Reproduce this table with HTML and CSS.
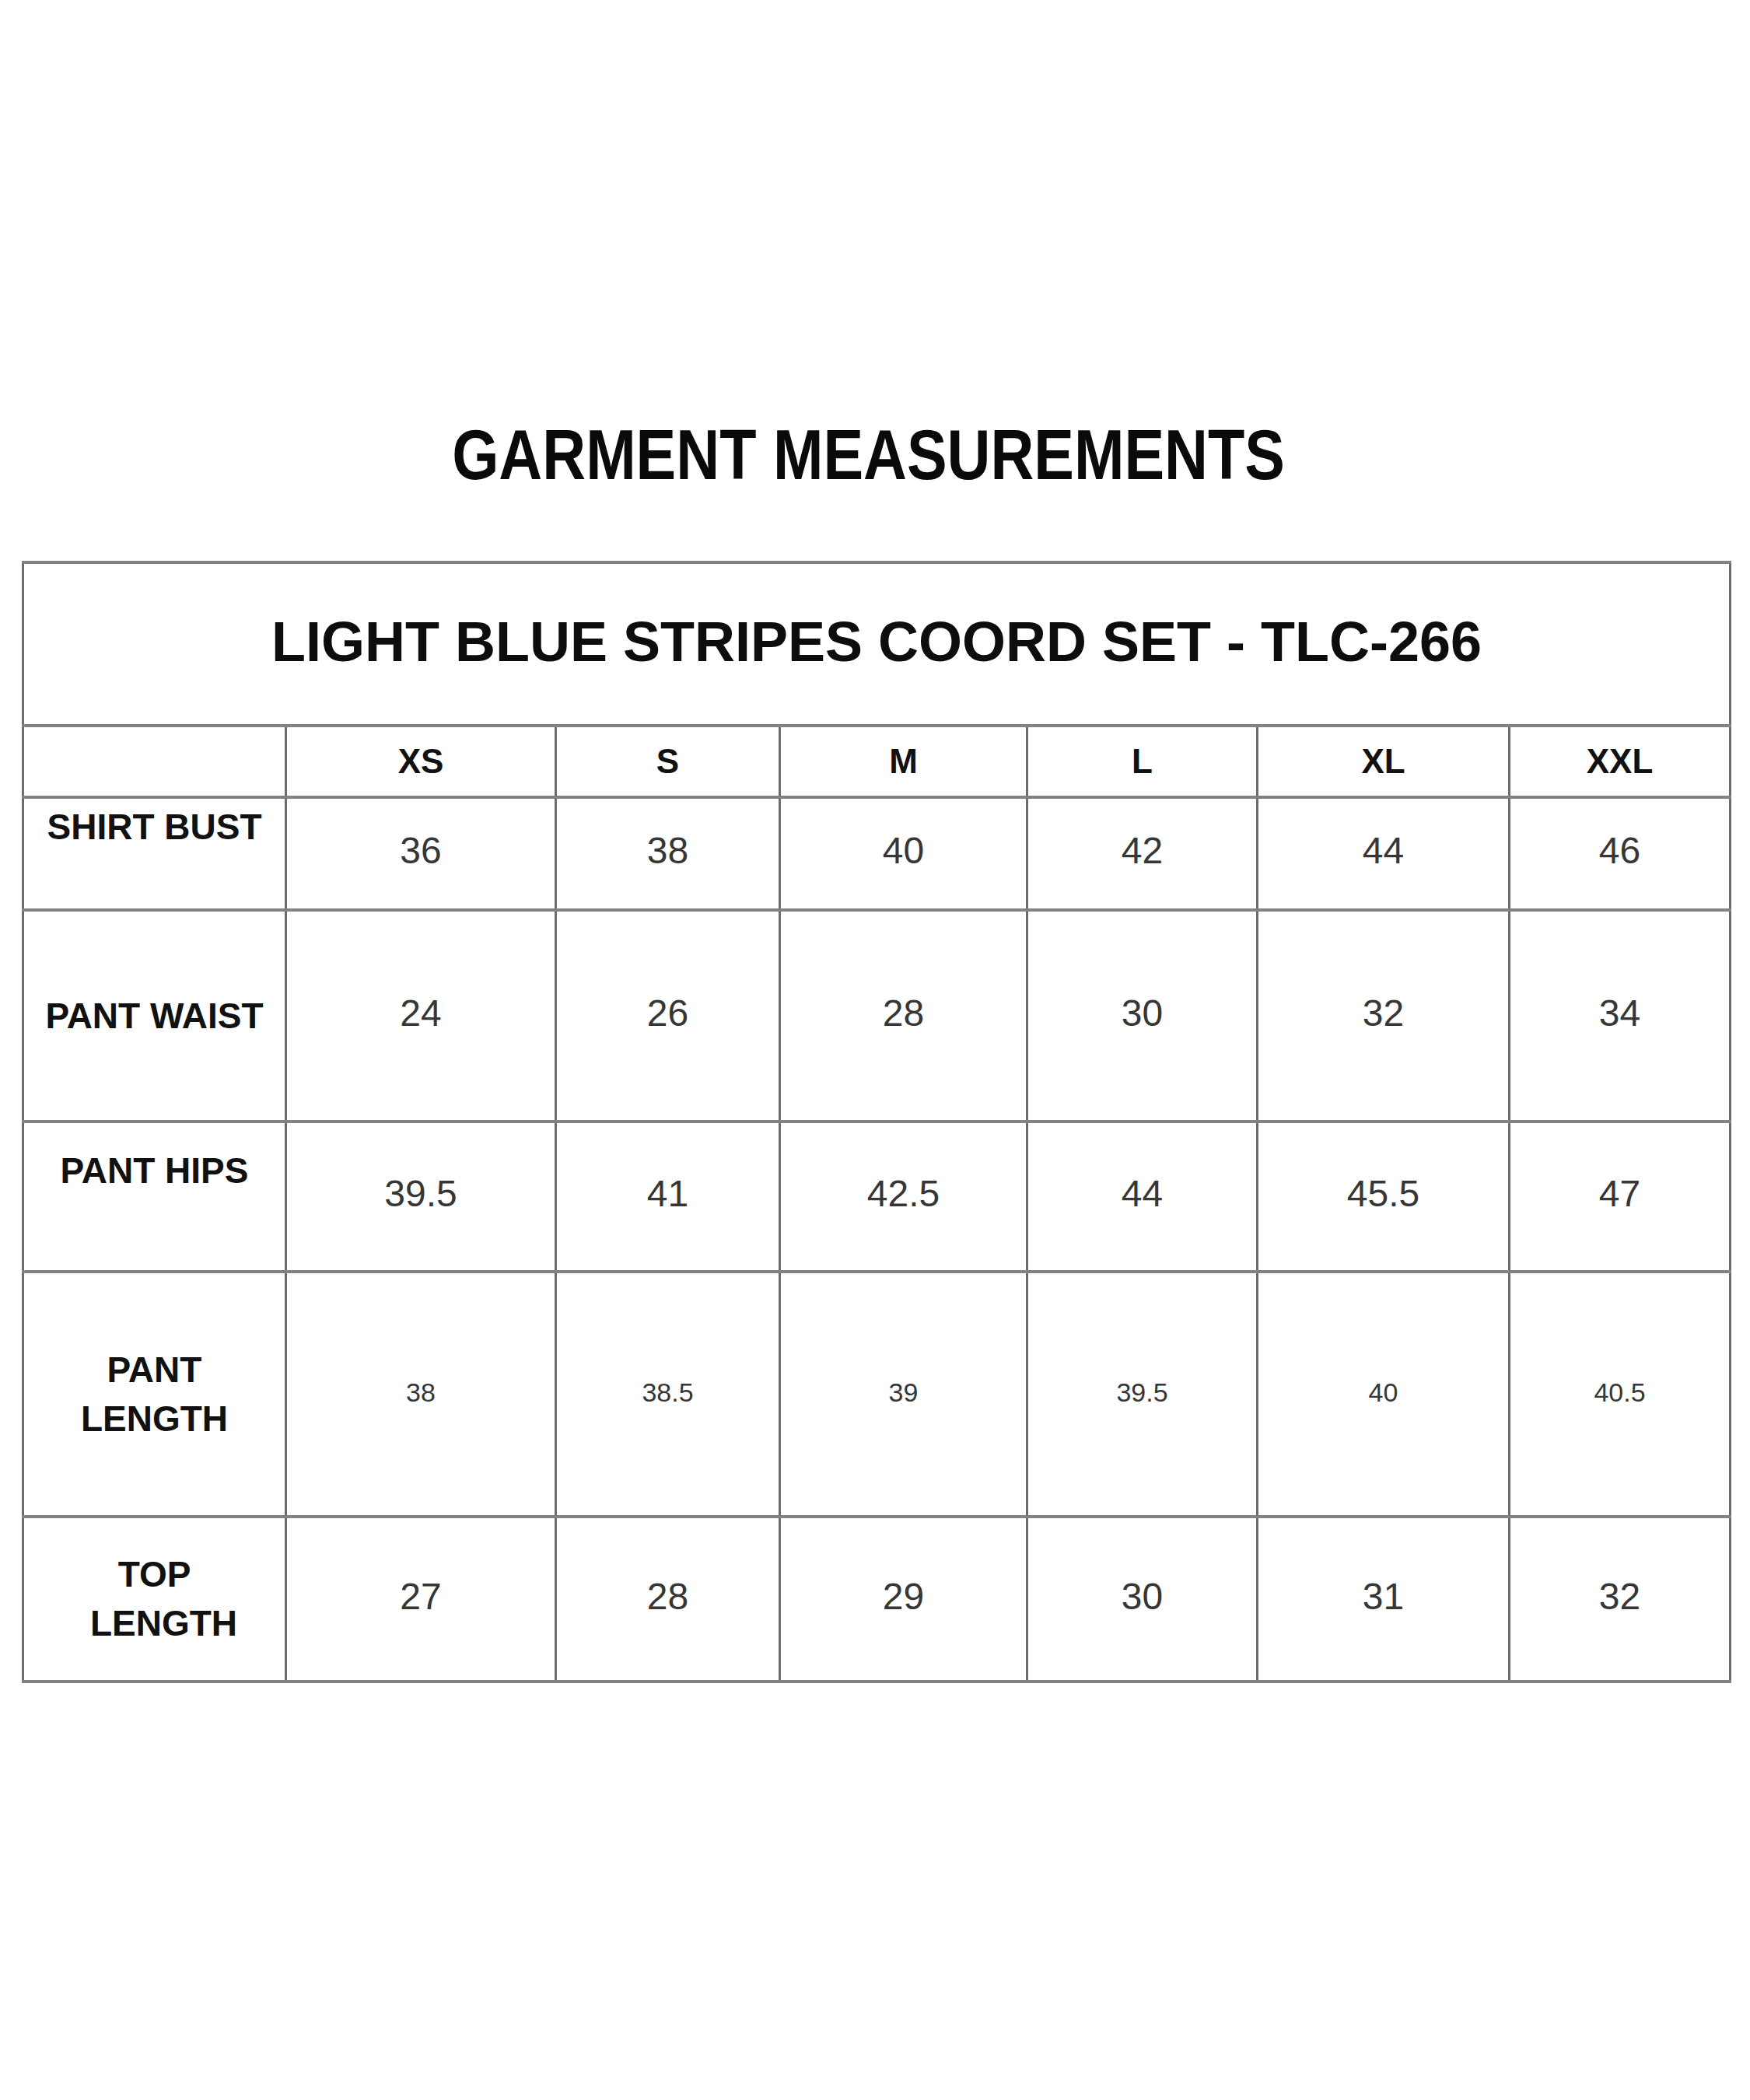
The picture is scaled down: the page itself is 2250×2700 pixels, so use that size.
FILE: index.html
```html
<!DOCTYPE html>
<html lang="en">
<head>
<meta charset="utf-8">
<title>Garment Measurements</title>
<link rel="stylesheet" href="styles.css">
</head>
<body>
<main class="page">
  <h1 class="heading"><span class="heading-text">GARMENT MEASUREMENTS</span></h1>
  <table class="chart">
    <colgroup>
      <col class="c-label">
      <col class="c-xs">
      <col class="c-s">
      <col class="c-m">
      <col class="c-l">
      <col class="c-xl">
      <col class="c-xxl">
    </colgroup>
    <tbody>
      <tr class="r-title">
        <td colspan="7" class="product">LIGHT BLUE STRIPES COORD SET - TLC-266</td>
      </tr>
      <tr class="r-sizes">
        <td></td>
        <td class="size">XS</td>
        <td class="size">S</td>
        <td class="size">M</td>
        <td class="size">L</td>
        <td class="size">XL</td>
        <td class="size">XXL</td>
      </tr>
      <tr class="r-bust">
        <td class="label top">SHIRT BUST</td>
        <td class="val">36</td>
        <td class="val">38</td>
        <td class="val">40</td>
        <td class="val">42</td>
        <td class="val">44</td>
        <td class="val">46</td>
      </tr>
      <tr class="r-waist">
        <td class="label">PANT WAIST</td>
        <td class="val">24</td>
        <td class="val">26</td>
        <td class="val">28</td>
        <td class="val">30</td>
        <td class="val">32</td>
        <td class="val">34</td>
      </tr>
      <tr class="r-hips">
        <td class="label top hips">PANT HIPS</td>
        <td class="val">39.5</td>
        <td class="val">41</td>
        <td class="val">42.5</td>
        <td class="val">44</td>
        <td class="val">45.5</td>
        <td class="val">47</td>
      </tr>
      <tr class="r-plength">
        <td class="label two">PANT<br>LENGTH</td>
        <td class="val small">38</td>
        <td class="val small">38.5</td>
        <td class="val small">39</td>
        <td class="val small">39.5</td>
        <td class="val small">40</td>
        <td class="val small">40.5</td>
      </tr>
      <tr class="r-tlength">
        <td class="label two">TOP<br><span class="shift">LENGTH</span></td>
        <td class="val">27</td>
        <td class="val">28</td>
        <td class="val">29</td>
        <td class="val">30</td>
        <td class="val">31</td>
        <td class="val">32</td>
      </tr>
    </tbody>
  </table>
</main>
</body>
</html>
```

FILE: styles.css
```css
html, body {
  margin: 0;
  padding: 0;
  background: #ffffff;
}

body {
  width: 2250px;
  height: 2700px;
  font-family: "Liberation Sans", Arial, sans-serif;
  color: #111111;
}

.page {
  display: flex;
  flex-direction: column;
  align-items: flex-start;
  padding-top: 540px;
}

.heading {
  align-self: center;
  margin: 0 0 0 -16px;
  font-size: 90px;
  line-height: 90px;
  font-weight: 700;
  color: #0a0a0a;
  white-space: nowrap;
}

.heading-text {
  display: inline-block;
  transform: scaleX(0.86);
  transform-origin: center;
}

.chart {
  margin: 91px 0 0 28px;
  width: 2195px;
  table-layout: fixed;
  border-collapse: collapse;
}

.c-label { width: 338px; }
.c-xs { width: 347px; }
.c-s { width: 288px; }
.c-m { width: 318px; }
.c-l { width: 296px; }
.c-xl { width: 324px; }
.c-xxl { width: 284px; }

.chart td {
  padding: 0;
  text-align: center;
  vertical-align: middle;
  border-top: 4px solid #828282;
  border-bottom: 4px solid #828282;
  border-left: 3px solid #6c6c6c;
  border-right: 3px solid #6c6c6c;
}

.r-title { height: 210px; }
.r-sizes { height: 92px; }
.r-bust { height: 145px; }
.r-waist { height: 272px; }
.r-hips { height: 193px; }
.r-plength { height: 315px; }
.r-tlength { height: 212px; }

.product {
  font-size: 72px;
  line-height: 1;
  font-weight: 700;
  color: #0d0d0d;
  padding-bottom: 6px !important;
}

.size {
  font-size: 44px;
  line-height: 1;
  font-weight: 700;
  color: #111111;
}

.label {
  font-size: 46px;
  line-height: 1;
  font-weight: 700;
  color: #111111;
}

.label.top {
  vertical-align: top;
  padding-top: 13px;
}

.label.hips {
  padding-top: 38px;
}

.label.two {
  line-height: 63px;
}

.shift {
  display: inline-block;
  padding-left: 24px;
}

.chart td.val {
  font-size: 48px;
  line-height: 1;
  font-weight: 400;
  color: #363636;
  padding-bottom: 7px;
}

.chart td.val.small {
  font-size: 34px;
  padding-bottom: 5px;
}
```
